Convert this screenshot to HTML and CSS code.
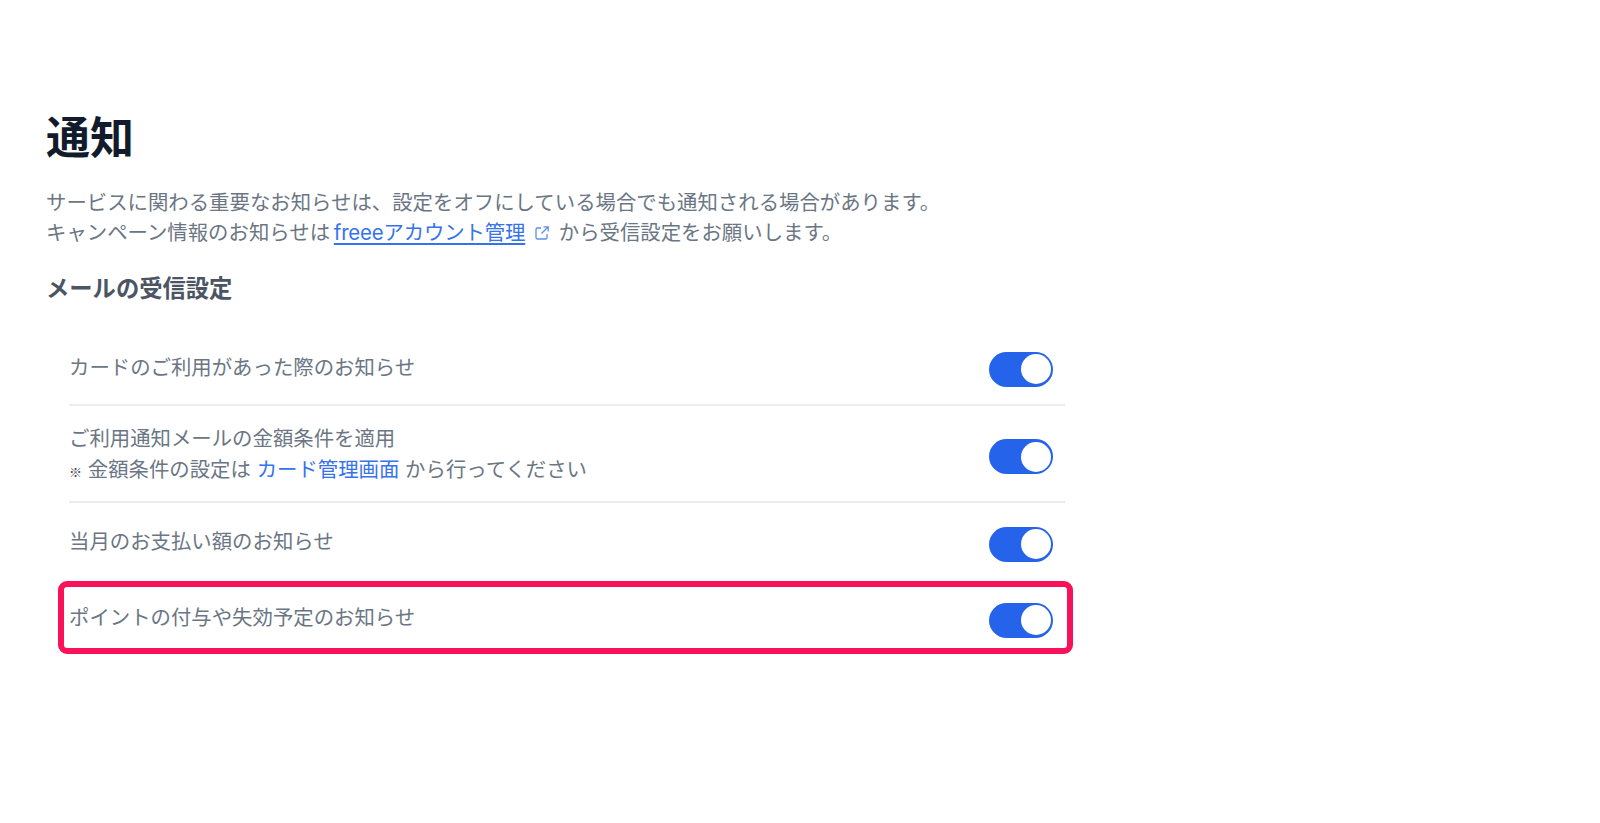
FILE: index.html
```html
<!DOCTYPE html>
<html lang="ja">
<head>
  <meta charset="UTF-8" />
  <meta name="viewport" content="width=device-width, initial-scale=1.0" />
  <title>通知</title>
  <link rel="stylesheet" href="styles.css">
</head>
<body>
  <div class="page">
    <h1>通知</h1>
    <p class="lead">
      サービスに関わる重要なお知らせは、設定をオフにしている場合でも通知される場合があります。<br>
      キャンペーン情報のお知らせは <a href="#" class="link-underline">freeeアカウント管理</a>
      <svg class="ext-icon" viewBox="0 0 16 16" fill="none" stroke="currentColor" stroke-width="1.3">
        <path d="M7 3H3.500a1.500 1.500 0 0 0-1.500 1.500v8a1.500 1.500 0 0 0 1.500 1.500h8a1.500 1.500 0 0 0 1.500-1.500V9"/>
        <path d="M9.500 1.800h4.700v4.700M14 2L7.500 8.500"/>
      </svg>
      から受信設定をお願いします。
    </p>
    <h2>メールの受信設定</h2>

    <div class="list">
      <div class="row row-first">
        <div class="label">カードのご利用があった際のお知らせ</div>
        <span class="toggle"></span>
      </div>
      <div class="row row-second">
        <div class="label">
          ご利用通知メールの金額条件を適用<br>
          <span class="note-mark">※</span> 金額条件の設定は <a href="#" class="link">カード管理画面</a> から行ってください
        </div>
        <span class="toggle"></span>
      </div>
      <div class="row row-third">
        <div class="label">当月のお支払い額のお知らせ</div>
        <span class="toggle"></span>
      </div>
      <div class="row row-last">
        <div class="label">ポイントの付与や失効予定のお知らせ</div>
        <span class="toggle"></span>
        <div class="highlight"></div>
      </div>
    </div>
  </div>
</body>
</html>
```

FILE: styles.css
```css
* {
  margin: 0;
  padding: 0;
  box-sizing: border-box;
  font-family: "Inter", "Noto Sans CJK JP", sans-serif;
}

body {
  background-color: #ffffff;
}

.page {
  width: 1065px;
  padding: 108px 0 0 46px;
}

h1 {
  font-size: 44px;
  line-height: 60px;
  font-weight: 700;
  color: #111b2b;
  margin-bottom: 20px;
}

.lead {
  font-size: 20.400px;
  line-height: 30px;
  color: #6b7684;
  margin-bottom: 26px;
}

h2 {
  font-size: 23.300px;
  line-height: 30px;
  font-weight: 700;
  color: #4b5563;
  margin-bottom: 30px;
}

a {
  color: #3572ee;
  text-decoration: none;
}

.link-underline {
  margin-left: -2px;
  letter-spacing: -0.150px;
  text-decoration: underline;
  text-underline-offset: 3px;
}

.ext-icon {
  width: 16px;
  height: 16px;
  margin: 0 3px 0 3px;
  vertical-align: -1px;
  color: #5b8def;
}

.list {
  margin-left: 23px;
}

.row {
  position: relative;
  display: flex;
  justify-content: space-between;
  align-items: center;
  padding-right: 12px;
  font-size: 20.400px;
  line-height: 30.600px;
  color: #6b7684;
}

.row-first,
.row-second {
  border-bottom: 2px solid #ececee;
}

.row-first {
  height: 72px;
}

.row-second {
  height: 97px;
}

.row-third {
  height: 82px;
}

.row-last {
  height: 70px;
}

.label {
  margin-bottom: 3px;
}

.row-first .label {
  margin-bottom: 1px;
}

.row-second .label {
  margin-top: 5px;
  margin-bottom: 0;
}

.row-second .toggle {
  margin-top: 6px;
}

.note-mark {
  font-size: 13px;
  font-weight: 900;
  color: #3f4753;
  font-family: "Noto Sans CJK JP", sans-serif;
}

.toggle {
  position: relative;
  width: 64px;
  height: 35px;
  border-radius: 18px;
  background-color: #2563eb;
}

.toggle::after {
  content: "";
  position: absolute;
  top: 2.500px;
  right: 2.500px;
  width: 30px;
  height: 30px;
  border-radius: 50%;
  background-color: #ffffff;
}

.highlight {
  position: absolute;
  top: -4px;
  bottom: 1px;
  left: -11px;
  right: -8px;
  border: 6px solid #f9115a;
  border-radius: 9px;
}
```
